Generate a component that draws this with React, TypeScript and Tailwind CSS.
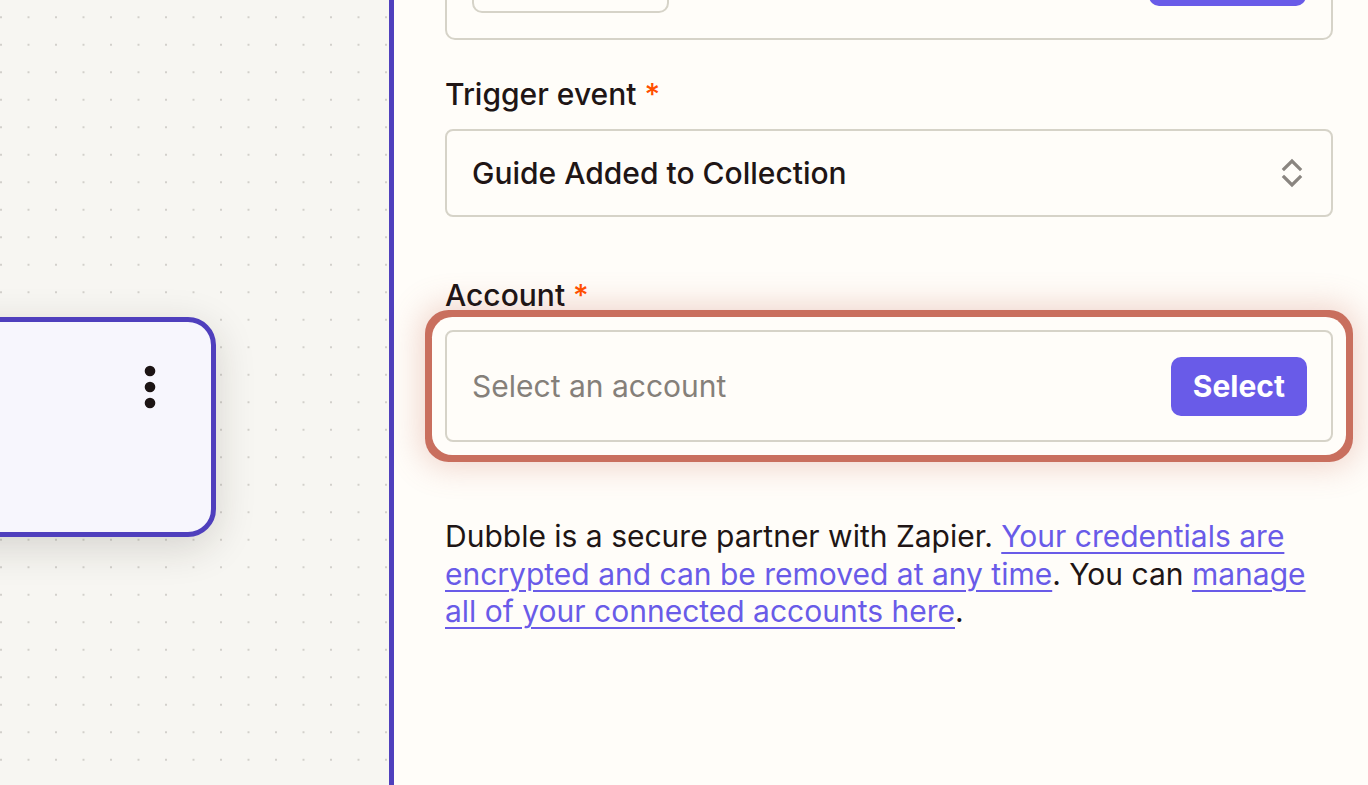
import React from 'react';

function Chevrons() {
  return (
    <svg width="22" height="34" viewBox="0 0 22 34" fill="none" stroke="#8a8580" strokeWidth="3.2" strokeLinecap="square">
      <path d="M3 13 L11 5 L19 13" />
      <path d="M3 21 L11 29 L19 21" />
    </svg>
  );
}

function KebabDots() {
  return (
    <svg width="12" height="44" viewBox="0 0 12 44" fill="#1c1414">
      <circle cx="6" cy="6" r="5.3" />
      <circle cx="6" cy="22" r="5.3" />
      <circle cx="6" cy="38" r="5.3" />
    </svg>
  );
}

function Canvas() {
  return (
    <div className="relative w-[389px] shrink-0 overflow-hidden bg-[#f7f6f2] bg-[radial-gradient(circle,#d2d0cb_1.1px,transparent_1.4px)] bg-[size:27.5px_27.5px] bg-[position:-12.75px_3.5px]">
      {/* step node, partly off-canvas */}
      <div className="absolute left-[-200px] top-[317px] h-[220px] w-[416px] rounded-[28px] border-[5px] border-[#4f3fbd] bg-[#f7f6fd] shadow-[0_10px_40px_rgba(40,30,20,0.16)]">
        <div className="absolute left-[339px] top-[43px]">
          <KebabDots />
        </div>
      </div>
    </div>
  );
}

function Label({ children }: { children: React.ReactNode }) {
  return (
    <div className="text-[30px] font-medium leading-[38px] text-[#201515]">
      {children} <span className="text-[#ff4f00]">*</span>
    </div>
  );
}

export default function App() {
  return (
    <div className="flex h-[785px] w-[1368px] overflow-hidden font-['Inter','Noto_Sans',sans-serif]">
      <Canvas />
      <div className="flex-1 border-l-[5px] border-[#4f40bd] bg-[#fffdf9] pl-[51px] pr-[35px]">
        {/* previous section (app box), cut by the top edge */}
        <div className="mt-[-60px] flex h-[100px] items-end justify-between rounded-[10px] border-2 border-[#d6d3c8] px-[25px] pb-[25px]">
          <div className="h-[44px] w-[197px] rounded-[10px] border-2 border-[#d6d3c8]" />
          <div className="mb-[7px] h-[44px] w-[157px] rounded-[10px] bg-[#695be8]" />
        </div>

        <div className="mt-[35px]">
          <Label>Trigger event</Label>
          <div className="mt-[16px] flex h-[88px] items-center justify-between rounded-[8px] border-2 border-[#d6d3c8] pl-[25px] pr-[28px]">
            <span className="text-[30px] font-medium text-[#201515]">Guide Added to Collection</span>
            <Chevrons />
          </div>
        </div>

        <div className="mt-[59px]">
          <Label>Account</Label>
          <div className="mt-[16px] flex h-[112px] items-center justify-between rounded-[8px] border-2 border-[#d6d3c8] bg-[#fffdf9] pl-[25px] pr-[24px] shadow-[0_0_0_13px_#fffdf9,0_0_0_20px_#c96f5e,0_0_32px_24px_rgba(201,111,94,0.3)]">
            <span className="text-[30px] text-[#85807a]">Select an account</span>
            <button className="h-[59px] rounded-[10px] bg-[#695be8] px-[22px] text-[30px] font-bold text-white">
              Select
            </button>
          </div>
        </div>

        <p className="mt-[76px] text-[30px] leading-[37.5px] text-[#201515]">
          Dubble is a secure partner with Zapier.{' '}
          <a className="text-[#695be8] underline decoration-2 underline-offset-[5px]">
            Your credentials are encrypted and can be removed at any time
          </a>
          . You can{' '}
          <a className="text-[#695be8] underline decoration-2 underline-offset-[5px]">
            manage all of your connected accounts here
          </a>
          .
        </p>
      </div>
    </div>
  );
}
